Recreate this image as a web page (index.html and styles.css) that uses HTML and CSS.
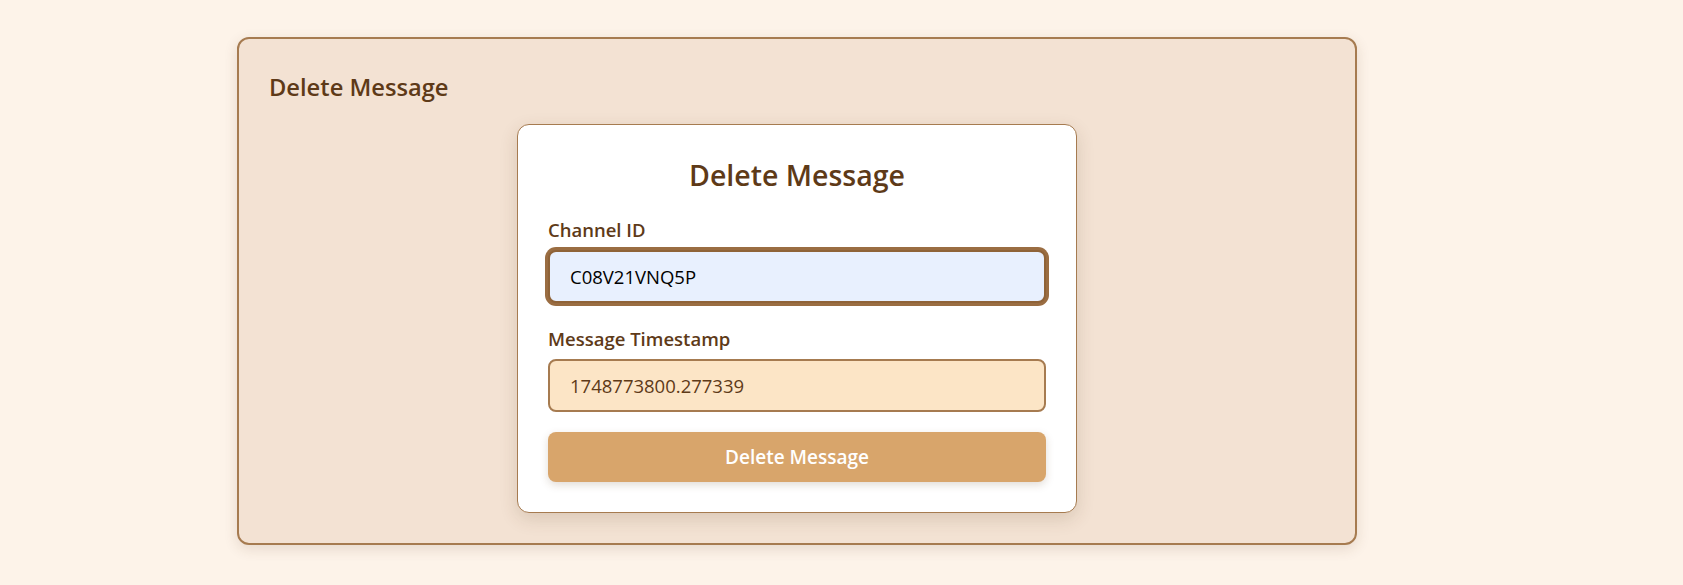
FILE: index.html
```html
<!DOCTYPE html>
<html lang="en">
<head>
<meta charset="utf-8">
<title>Delete Message</title>
<link rel="stylesheet" href="styles.css">
</head>
<body>
<main class="page">
  <section class="panel">
    <h2 class="panel-title">Delete Message</h2>
    <form class="card">
      <h1 class="card-title">Delete Message</h1>
      <div class="field">
        <label class="field-label" for="channel">Channel ID</label>
        <input class="field-input field-input--autofill is-focused" id="channel" type="text" value="C08V21VNQ5P" autofocus>
      </div>
      <div class="field field--last">
        <label class="field-label" for="ts">Message Timestamp</label>
        <input class="field-input" id="ts" type="text" value="1748773800.277339">
      </div>
      <button class="submit" type="button">Delete Message</button>
    </form>
  </section>
</main>
</body>
</html>
```
FILE: styles.css
```css
* { box-sizing: border-box; }

html, body {
  margin: 0;
  padding: 0;
  background: #fdf3e9;
  font-family: "Open Sans", "Noto Sans", sans-serif;
  color: #5e3a18;
}

.page {
  padding: 37px 0 40px 237px;
}

.panel {
  width: 1120px;
  height: 508px;
  background: #f3e2d3;
  border: 2px solid #a67b50;
  border-radius: 12px;
  padding: 30px;
  box-shadow: 0 4px 14px rgba(90, 60, 30, 0.14);
}

.panel-title {
  margin: 0 0 18px;
  font-size: 23.7px;
  line-height: 37px;
  font-weight: 600;
  color: #5e3a18;
}

.card {
  width: 560px;
  margin: 0 auto;
  background: #ffffff;
  border: 1px solid #a67b50;
  border-radius: 12px;
  padding: 30px;
  box-shadow: 0 6px 18px rgba(90, 60, 30, 0.16);
}

.card-title {
  margin: 0 0 23px;
  text-align: center;
  font-size: 28.5px;
  line-height: 40px;
  font-weight: 600;
  color: #5e3a18;
}

.field {
  display: flex;
  flex-direction: column;
  gap: 8px;
  margin-bottom: 24px;
}

.field--last {
  margin-bottom: 20px;
}

.field-label {
  font-size: 18.5px;
  line-height: 24px;
  font-weight: 600;
  color: #5e3a18;
}

.field-input {
  display: block;
  width: 100%;
  height: 53px;
  padding: 0 20px;
  border: 2px solid #a67b50;
  border-radius: 8px;
  background: #fce5c6;
  font-family: "Open Sans", "Noto Sans", sans-serif;
  font-size: 18.5px;
  color: #5e3a18;
  outline: none;
}

.field-input--autofill {
  background: #e8f0fe;
  color: #000000;
}

.is-focused,
.field-input:focus {
  border-color: #8f6338;
  box-shadow: 0 0 0 3px #9a6d42;
}

.submit {
  display: block;
  width: 100%;
  height: 50px;
  border: 0;
  border-radius: 8px;
  background: #d8a56b;
  color: #ffffff;
  font-family: "Open Sans", "Noto Sans", sans-serif;
  font-size: 19px;
  font-weight: 600;
  box-shadow: 0 3px 8px rgba(90, 60, 30, 0.18);
  cursor: pointer;
}
```
